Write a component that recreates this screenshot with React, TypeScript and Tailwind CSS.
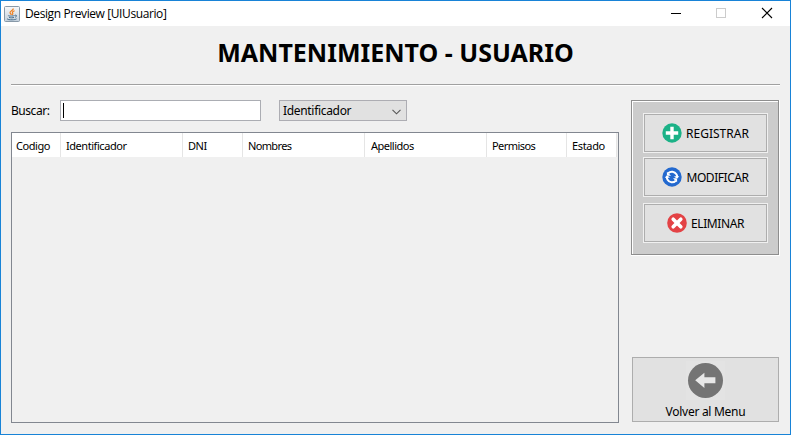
import type { ReactNode } from "react";

const bodyFont = "font-['Noto_Sans',sans-serif]";

const columns = [
  { label: "Codigo", style: "w-[49px] pl-[4px] tracking-[-0.45px]" },
  { label: "Identificador", style: "w-[122px] pl-[5px] tracking-[-0.45px]" },
  { label: "DNI", style: "w-[60px] pl-[5px] tracking-[-0.5px]" },
  { label: "Nombres", style: "w-[122px] pl-[5px] tracking-[-0.65px]" },
  { label: "Apellidos", style: "w-[122px] pl-[6px] tracking-[-0.5px]" },
  { label: "Permisos", style: "w-[80px] pl-[5px] tracking-[-0.55px]" },
  { label: "Estado", style: "w-[50px] pl-[5px] tracking-[-0.35px]" },
];

function JavaIcon() {
  return (
    <svg width="16" height="16" viewBox="0 0 16 16" className="shrink-0">
      <defs>
        <linearGradient id="java" x1="0" y1="0" x2="0" y2="1">
          <stop offset="0" stopColor="#f7f8f9" />
          <stop offset="1" stopColor="#c3d0dc" />
        </linearGradient>
      </defs>
      <rect x="0.5" y="0.5" width="15" height="15" rx="1" fill="url(#java)" stroke="#8899a8" />
      <path d="M9.3 2.5C9.5 4.5 5.5 5 6 6.8C6.2 7.6 7.2 8 7.4 8.9M10.6 4.7C8.5 5.5 8 6.2 8.7 7.1C9.1 7.8 8.7 8.4 8.2 8.9" fill="none" stroke="#ee7d1b" strokeWidth="1.2" />
      <path d="M4.3 9.3C3.5 10.2 9.2 10.3 10.6 9.5M11 9.2C13.2 8.7 13 10.8 11 11.2M5 11.3C6.5 12 9 11.9 10 11.4M3.4 12.7C2 13.9 10.5 14.3 12.6 12.9" fill="none" stroke="#49708f" strokeWidth="1" />
    </svg>
  );
}

function AddIcon() {
  return (
    <svg width="20" height="20" viewBox="0 0 20 20" className="shrink-0">
      <circle cx="10" cy="10" r="9.7" fill="#1bb287" />
      <path d="M10 3.8V16.2M3.8 10H16.2" stroke="#fff" strokeWidth="3.4" />
    </svg>
  );
}

function RefreshIcon() {
  return (
    <svg width="20" height="20" viewBox="0 0 20 20" className="shrink-0">
      <circle cx="10" cy="10" r="9.7" fill="#2369cf" />
      <path d="M6.2 6.2C8.6 3.8 12.6 4.2 14.4 7.2C14.9 8 15.2 9 15.2 10M13.8 13.8C11.4 16.2 7.4 15.8 5.6 12.8C5.1 12 4.8 11 4.8 10" fill="none" stroke="#fff" strokeWidth="2" />
      <path d="M12 9.3H17.2L15 12.1ZM8 10.7H2.8L5 7.9ZM4.9 4.8V8.8H9ZM15.1 15.2V11.2H11Z" fill="#fff" />
    </svg>
  );
}

function DeleteIcon() {
  return (
    <svg width="20" height="20" viewBox="0 0 20 20" className="shrink-0">
      <circle cx="10" cy="10" r="9.8" fill="#e34245" />
      <path d="M6.2 6.2L13.8 13.8M13.8 6.2L6.2 13.8" stroke="#fff" strokeWidth="3.6" strokeLinecap="round" />
    </svg>
  );
}

function ActionButton({ icon, label, spacing }: { icon: ReactNode; label: string; spacing: string }) {
  return (
    <button className="h-10 w-[125px] border border-[#f0f0f0] bg-[#e1e1e1]">
      <span className={`flex h-full w-full items-center justify-center gap-1 border border-[#adadad] text-[12px] ${spacing}`}>
        {icon}
        <span>{label}</span>
      </span>
    </button>
  );
}

export default function App() {
  return (
    <div className={`flex h-[435px] w-[791px] flex-col border border-[#1883d7] bg-[#f0f0f0] text-[12px] leading-[15px] text-black ${bodyFont}`}>
      <header className="flex h-[25px] shrink-0 items-center bg-white pl-[3px]">
        <JavaIcon />
        <span className="ml-[5px] flex-1 pb-px font-['Open_Sans',sans-serif] text-[12px] tracking-[-0.4px]">Design Preview [UIUsuario]</span>
        <svg width="120" height="25" viewBox="0 0 120 25" fill="none" shapeRendering="crispEdges">
          <path d="M1 12.5H11" stroke="#000" />
          <rect x="46.5" y="7.5" width="9" height="9" stroke="#ccc" />
          <path d="M92 7L102 17M102 7L92 17" stroke="#000" strokeWidth="1.1" shapeRendering="auto" />
        </svg>
      </header>

      <main className="flex flex-1 flex-col pl-[10px] pr-[10px]">
        <h1 className="flex h-[58px] items-center justify-center pb-[7px] text-[25px] font-bold leading-[30px]">
          <span>MANTENIMIENTO - USUARIO</span>
        </h1>
        <div className="h-[2px] border-b border-t border-b-white border-t-[#a0a0a0]" />

        <div className="mt-[14px] flex justify-between">
          <section className="w-[608px]">
            <div className="flex h-[21px] items-center">
              <label className="w-[49px] tracking-[-0.45px]">Buscar:</label>
              <div className="flex h-[21px] w-[201px] items-center border border-[#abadb3] bg-white pl-[2px]">
                <span className="h-[15px] w-px bg-black" />
              </div>
              <div className="ml-[18px] flex h-[21px] w-[128px] items-center justify-between border border-[#adadb3] bg-[#e1e1e1] pl-[3px] pr-[5px]">
                <span className="tracking-[-0.32px]">Identificador</span>
                <svg width="9" height="6" viewBox="0 0 9 6" fill="none" className="mt-[2px]">
                  <path d="M0.5 0.8L4.5 4.8L8.5 0.8" stroke="#555" strokeWidth="1.1" />
                </svg>
              </div>
            </div>
            <div className="mt-[11px] h-[291px] border border-[#828790]">
              <div className="flex h-6 w-[605px] bg-white text-[11px]">
                {columns.map((c) => (
                  <div key={c.label} className={`flex h-6 shrink-0 items-center border-r border-[#e5e5e5] ${c.style}`}>
                    {c.label}
                  </div>
                ))}
              </div>
            </div>
          </section>

          <aside className="flex w-[149px] flex-col">
            <div className="h-[156px] border-b border-r border-white">
              <div className="h-[155px] border border-[#8e8e8e]">
                <div className="flex h-[153px] flex-col border-l border-t border-white bg-[#ccc] pl-[10px] pt-[11px]">
                  <ActionButton icon={<AddIcon />} label="REGISTRAR" spacing="tracking-[0px]" />
                  <div className="mt-1 h-10"><ActionButton icon={<RefreshIcon />} label="MODIFICAR" spacing="tracking-[-0.45px]" /></div>
                  <div className="mt-1.5 h-10"><ActionButton icon={<DeleteIcon />} label="ELIMINAR" spacing="tracking-[-0.4px]" /></div>
                </div>
              </div>
            </div>
            <button className="ml-px mt-[101px] flex h-[65px] w-[147px] flex-col items-center border border-[#adadad] bg-[#e1e1e1] pt-[3px]">
              <svg width="39" height="39" viewBox="0 0 39 39">
                <rect width="39" height="39" fill="#e3e3e3" />
                <circle cx="19.5" cy="19.5" r="17.5" fill="#747474" />
                <path d="M9.2 19.3L18.4 11.7V16.3H29.4V22.3H18.4V27Z" fill="#e8e8e8" />
              </svg>
              <span className="mt-[4px] tracking-[-0.28px]">Volver al Menu</span>
            </button>
          </aside>
        </div>
      </main>
    </div>
  );
}
